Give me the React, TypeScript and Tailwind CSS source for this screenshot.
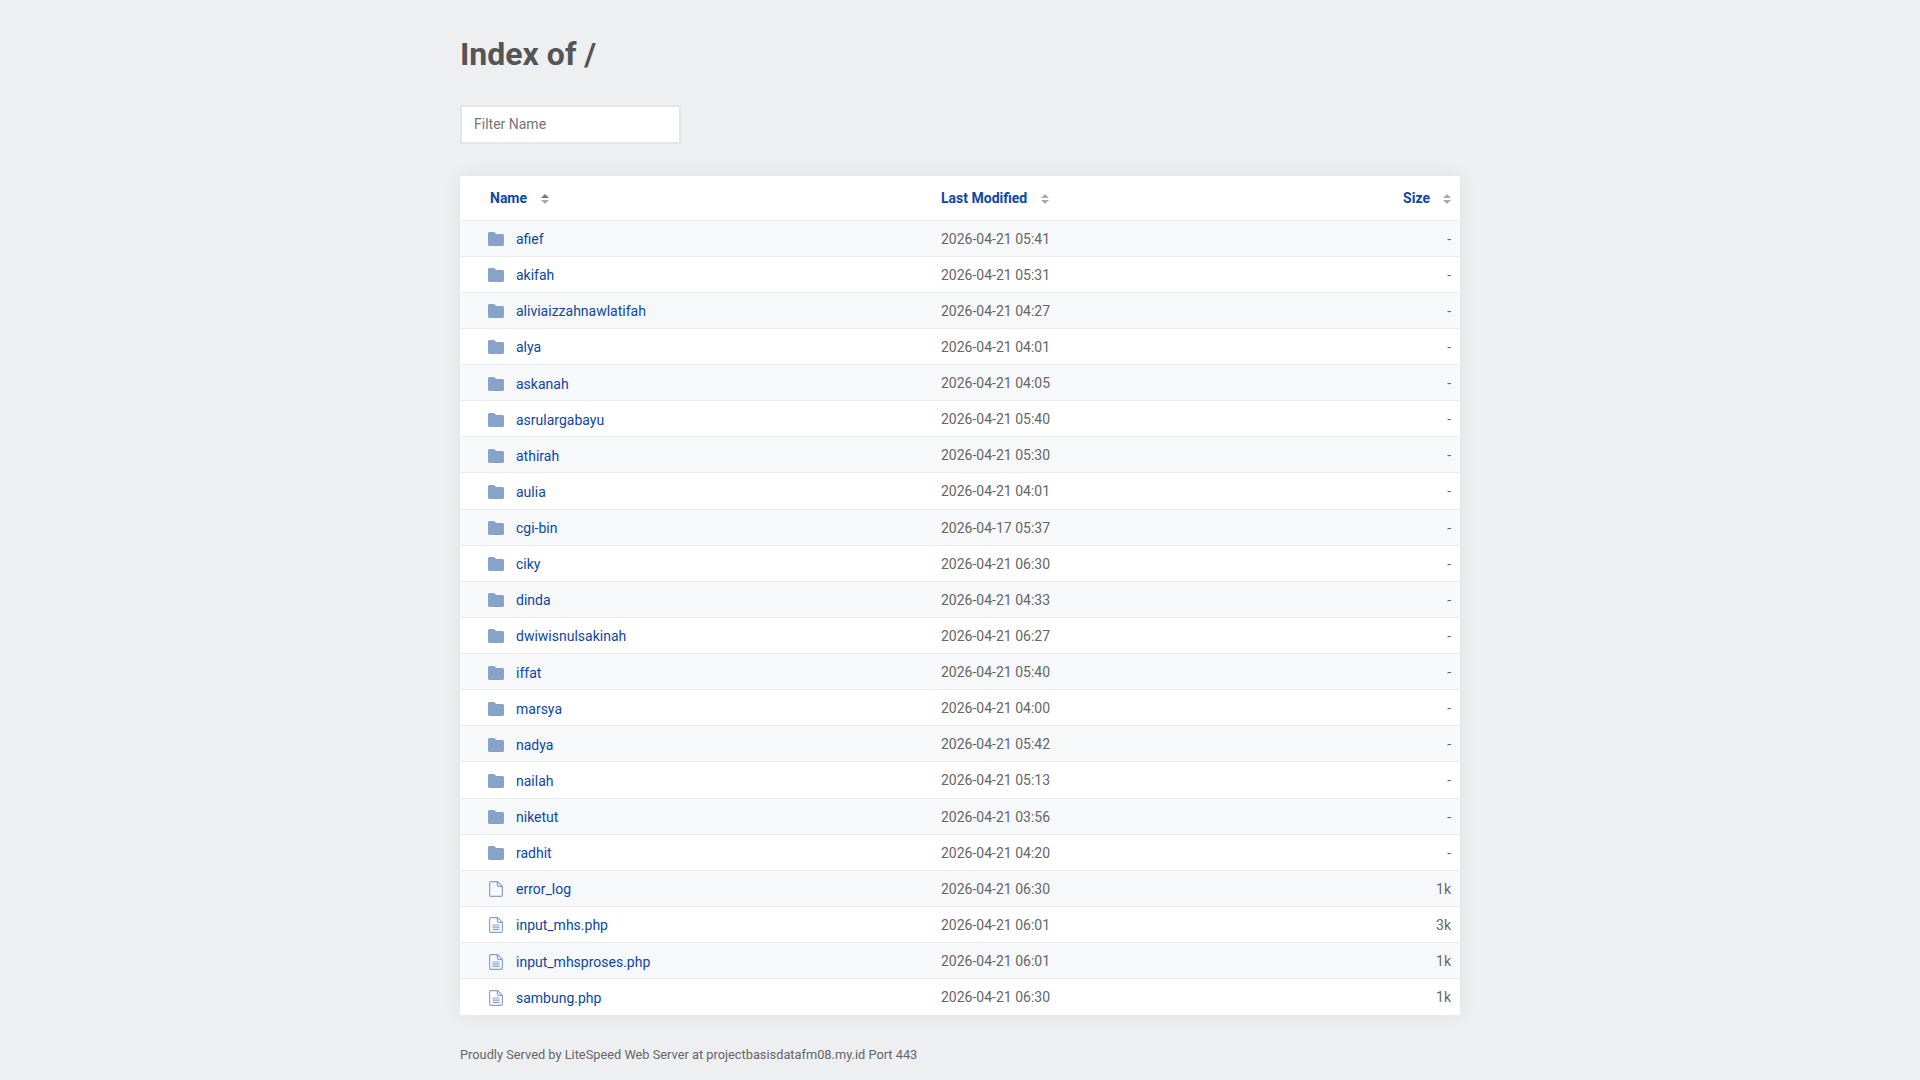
import React from "react";

type Entry = { name: string; date: string; size: string; kind: "dir" | "file" | "text" };

const entries: Entry[] = [
  { name: "afief", date: "2026-04-21 05:41", size: "-", kind: "dir" },
  { name: "akifah", date: "2026-04-21 05:31", size: "-", kind: "dir" },
  { name: "aliviaizzahnawlatifah", date: "2026-04-21 04:27", size: "-", kind: "dir" },
  { name: "alya", date: "2026-04-21 04:01", size: "-", kind: "dir" },
  { name: "askanah", date: "2026-04-21 04:05", size: "-", kind: "dir" },
  { name: "asrulargabayu", date: "2026-04-21 05:40", size: "-", kind: "dir" },
  { name: "athirah", date: "2026-04-21 05:30", size: "-", kind: "dir" },
  { name: "aulia", date: "2026-04-21 04:01", size: "-", kind: "dir" },
  { name: "cgi-bin", date: "2026-04-17 05:37", size: "-", kind: "dir" },
  { name: "ciky", date: "2026-04-21 06:30", size: "-", kind: "dir" },
  { name: "dinda", date: "2026-04-21 04:33", size: "-", kind: "dir" },
  { name: "dwiwisnulsakinah", date: "2026-04-21 06:27", size: "-", kind: "dir" },
  { name: "iffat", date: "2026-04-21 05:40", size: "-", kind: "dir" },
  { name: "marsya", date: "2026-04-21 04:00", size: "-", kind: "dir" },
  { name: "nadya", date: "2026-04-21 05:42", size: "-", kind: "dir" },
  { name: "nailah", date: "2026-04-21 05:13", size: "-", kind: "dir" },
  { name: "niketut", date: "2026-04-21 03:56", size: "-", kind: "dir" },
  { name: "radhit", date: "2026-04-21 04:20", size: "-", kind: "dir" },
  { name: "error_log", date: "2026-04-21 06:30", size: "1k", kind: "file" },
  { name: "input_mhs.php", date: "2026-04-21 06:01", size: "3k", kind: "text" },
  { name: "input_mhsproses.php", date: "2026-04-21 06:01", size: "1k", kind: "text" },
  { name: "sambung.php", date: "2026-04-21 06:30", size: "1k", kind: "text" },
];

const EntryIcon = ({ kind }: { kind: Entry["kind"] }) => {
  if (kind === "dir") {
    return (
      <svg viewBox="0 0 16 14" className="w-4 h-[14px] shrink-0" fill="#88a3c9">
        <path d="M1.5 0h4.2c.5 0 .8.2 1.1.5L8.2 2h6.3c.8 0 1.5.7 1.5 1.5v9c0 .8-.7 1.5-1.5 1.5h-13C.7 14 0 13.3 0 12.5v-11C0 .7.7 0 1.5 0z" />
      </svg>
    );
  }
  return (
    <svg viewBox="0 0 14 16" className="w-[14px] h-4 shrink-0" fill="none" stroke="#88a3c9" strokeWidth="1.2">
      <path d="M1.6.6h7l4.8 4.8v8.4c0 .9-.7 1.6-1.6 1.6H1.6C.9 15.4.6 14.7.6 13.8V2.2C.6 1.3.9.6 1.6.6z" />
      <path d="M8.4.8v3.4c0 .7.5 1.2 1.2 1.2h3.6" />
      {kind === "text" && <path d="M3.4 8h7.2M3.4 10.2h7.2M3.4 12.4h7.2" />}
    </svg>
  );
};

const SortIcon = ({ active }: { active?: boolean }) => (
  <svg viewBox="0 0 8 10" className="w-2 h-[10px] inline-block mt-[2px]">
    <path d="M4 0l4 4H0z" fill={active ? "#777777" : "#aaaaaa"} />
    <path d="M4 10L0 6h8z" fill="#aaaaaa" />
  </svg>
);

export default function App() {
  return (
    <div className="min-h-screen bg-[#eeeff1] font-['Roboto',sans-serif] text-[#666666]">
      <div className="w-[1000px] mx-auto">
        <h1 className="pt-[32px] text-[32px] leading-[44px] font-bold text-[#555555]">Index of /</h1>

        <input
          type="text"
          placeholder="Filter Name"
          className="block mt-[29px] w-[221px] h-[39px] pl-[12px] pr-[13px] pb-[1px] bg-white border-2 border-[#e3e5e8] text-sm outline-none placeholder:text-[#757575]"
        />

        <table className="mt-[32px] w-full table-fixed border-collapse bg-white text-sm shadow-[0_0_20px_rgba(0,0,0,0.06)]">
          <thead>
            <tr className="h-[44px] border-b border-[#e9ebee]">
              <th className="w-[480px] pl-[30px] text-left font-bold text-[#0d47a1]">
                <span className="inline-flex items-center gap-[14px]">Name <SortIcon active /></span>
              </th>
              <th className="pl-[1px] text-left font-bold text-[#0d47a1]">
                <span className="inline-flex items-center gap-[14px]">Last Modified <SortIcon /></span>
              </th>
              <th className="w-[200px] pr-[9px] text-right font-bold text-[#0d47a1]">
                <span className="inline-flex items-center gap-[13px]">Size <SortIcon /></span>
              </th>
            </tr>
          </thead>
          <tbody>
            {entries.map((entry, i) => (
              <tr key={entry.name} className={`h-[36.14px] border-b border-[#e9ebee] last:border-b-0 ${i % 2 === 0 ? "bg-[#f7f8fa]" : "bg-white"}`}>
                <td className="pl-[28px] pt-[2px]">
                  <div className="flex items-center">
                    <span className="w-[28px] flex"><span className="w-4 flex justify-center"><EntryIcon kind={entry.kind} /></span></span>
                    <a href="#" className="text-[#0d47a1]">{entry.name}</a>
                  </div>
                </td>
                <td className="pl-[1px] pt-[1px]">{entry.date}</td>
                <td className="pr-[9px] pt-[1px] text-right">{entry.size}</td>
              </tr>
            ))}
          </tbody>
        </table>

        <p className="mt-[30px] text-[12.8px] leading-[20px] text-[#666666]">
          Proudly Served by LiteSpeed Web Server at projectbasisdatafm08.my.id Port 443
        </p>
      </div>
    </div>
  );
}
